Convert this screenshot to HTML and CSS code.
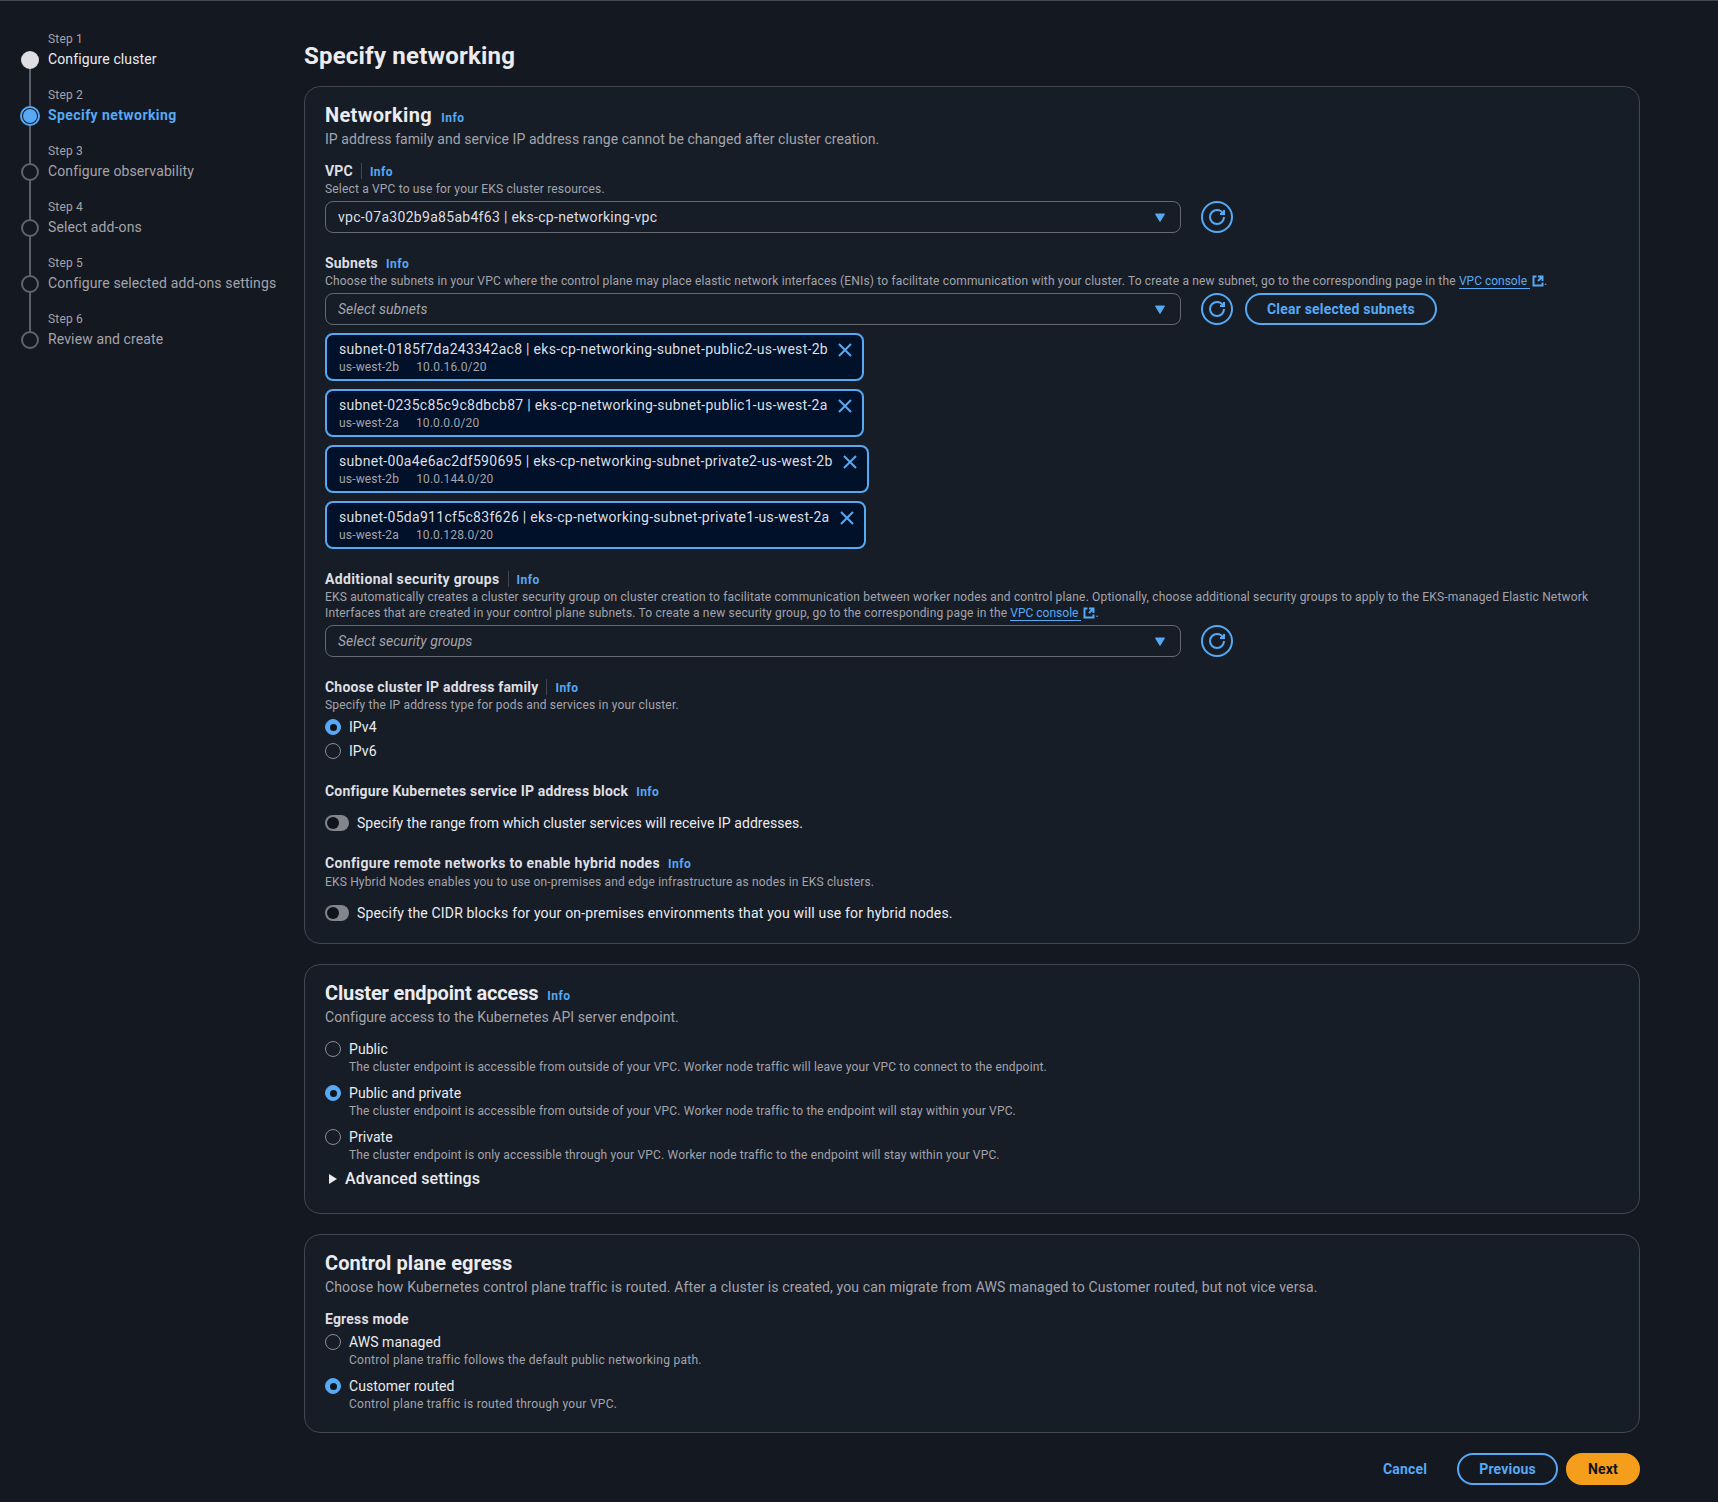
FILE: index.html
```html
<!DOCTYPE html>
<html lang="en">
<head>
  <meta charset="UTF-8">
  <title>Specify networking</title>
  <link rel="stylesheet" href="styles.css">
</head>
<body>
<svg class="icon-defs" aria-hidden="true">
  <symbol id="i-refresh" viewBox="0 0 16 16"><path d="M15 8c0 3.87-3.13 7-7 7s-7-3.13-7-7 3.13-7 7-7c2.79 0 5.2 1.63 6.33 4"/><path d="M15 1v4h-4"/></symbol>
  <symbol id="i-caret" viewBox="0 0 16 16"><path class="solid" d="M3.5 5h9L8 12.5z"/></symbol>
  <symbol id="i-close" viewBox="0 0 16 16"><path d="M2 2l12 12M14 2L2 14"/></symbol>
  <symbol id="i-external" viewBox="0 0 16 16"><path d="M14 8.01v-6H8M14.02 2 8 8M6 2H2v12h12v-4"/></symbol>
</svg>

<div class="layout">
  <!-- Wizard steps -->
  <nav class="sidebar">
    <ol class="steps">
      <li class="step done"><span class="marker"></span><div><div class="step-num">Step 1</div><div class="step-title">Configure cluster</div></div></li>
      <li class="step active"><span class="marker"></span><div><div class="step-num">Step 2</div><div class="step-title">Specify networking</div></div></li>
      <li class="step"><span class="marker"></span><div><div class="step-num">Step 3</div><div class="step-title">Configure observability</div></div></li>
      <li class="step"><span class="marker"></span><div><div class="step-num">Step 4</div><div class="step-title">Select add-ons</div></div></li>
      <li class="step"><span class="marker"></span><div><div class="step-num">Step 5</div><div class="step-title">Configure selected add-ons settings</div></div></li>
      <li class="step"><span class="marker"></span><div><div class="step-num">Step 6</div><div class="step-title">Review and create</div></div></li>
    </ol>
  </nav>

  <main class="content">
    <h1 class="page-title">Specify networking</h1>

    <!-- Networking -->
    <section class="card">
      <h2 class="card-title wide">Networking <a class="info">Info</a></h2>
      <p class="card-desc">IP address family and service IP address range cannot be changed after cluster creation.</p>

      <div class="field">
        <div class="label">VPC<span class="divider"></span><a class="info">Info</a></div>
        <p class="hint">Select a VPC to use for your EKS cluster resources.</p>
        <div class="select-row">
          <div class="select"><span>vpc-07a302b9a85ab4f63 | eks-cp-networking-vpc</span><svg class="icon"><use href="#i-caret"/></svg></div>
          <button class="refresh"><svg class="icon"><use href="#i-refresh"/></svg></button>
        </div>
      </div>

      <div class="field">
        <div class="label">Subnets<a class="info spaced">Info</a></div>
        <p class="hint">Choose the subnets in your VPC where the control plane may place elastic network interfaces (ENIs) to facilitate communication with your cluster. To create a new subnet, go to the corresponding page in the <a class="ext-link">VPC console</a><svg class="icon ext"><use href="#i-external"/></svg>.</p>
        <div class="select-row">
          <div class="select placeholder"><span>Select subnets</span><svg class="icon"><use href="#i-caret"/></svg></div>
          <button class="refresh"><svg class="icon"><use href="#i-refresh"/></svg></button>
          <button class="btn clear">Clear selected subnets</button>
        </div>
        <div class="tokens">
          <div class="token">
            <div><div class="token-name">subnet-0185f7da243342ac8 | eks-cp-networking-subnet-public2-us-west-2b</div><div class="token-meta"><span>us-west-2b</span><span>10.0.16.0/20</span></div></div>
            <svg class="icon"><use href="#i-close"/></svg>
          </div>
          <div class="token narrow">
            <div><div class="token-name">subnet-0235c85c9c8dbcb87 | eks-cp-networking-subnet-public1-us-west-2a</div><div class="token-meta"><span>us-west-2a</span><span>10.0.0.0/20</span></div></div>
            <svg class="icon"><use href="#i-close"/></svg>
          </div>
          <div class="token">
            <div><div class="token-name">subnet-00a4e6ac2df590695 | eks-cp-networking-subnet-private2-us-west-2b</div><div class="token-meta"><span>us-west-2b</span><span>10.0.144.0/20</span></div></div>
            <svg class="icon"><use href="#i-close"/></svg>
          </div>
          <div class="token">
            <div><div class="token-name">subnet-05da911cf5c83f626 | eks-cp-networking-subnet-private1-us-west-2a</div><div class="token-meta"><span>us-west-2a</span><span>10.0.128.0/20</span></div></div>
            <svg class="icon"><use href="#i-close"/></svg>
          </div>
        </div>
      </div>

      <div class="field">
        <div class="label wide">Additional security groups<span class="divider"></span><a class="info">Info</a></div>
        <p class="hint">EKS automatically creates a cluster security group on cluster creation to facilitate communication between worker nodes and control plane. Optionally, choose additional security groups to apply to the EKS-managed Elastic Network Interfaces that are created in your control plane subnets. To create a new security group, go to the corresponding page in the <a class="ext-link">VPC console</a><svg class="icon ext"><use href="#i-external"/></svg>.</p>
        <div class="select-row">
          <div class="select placeholder"><span>Select security groups</span><svg class="icon"><use href="#i-caret"/></svg></div>
          <button class="refresh"><svg class="icon"><use href="#i-refresh"/></svg></button>
        </div>
      </div>

      <div class="field">
        <div class="label">Choose cluster IP address family<span class="divider"></span><a class="info">Info</a></div>
        <p class="hint">Specify the IP address type for pods and services in your cluster.</p>
        <div class="radios tight">
          <div class="radio checked"><span class="dot"></span><div class="radio-label">IPv4</div></div>
          <div class="radio"><span class="dot"></span><div class="radio-label">IPv6</div></div>
        </div>
      </div>

      <div class="field">
        <div class="label">Configure Kubernetes service IP address block<a class="info spaced">Info</a></div>
        <div class="toggle-row first"><span class="toggle"></span>Specify the range from which cluster services will receive IP addresses.</div>
      </div>

      <div class="field">
        <div class="label wide">Configure remote networks to enable hybrid nodes<a class="info spaced">Info</a></div>
        <p class="hint lead">EKS Hybrid Nodes enables you to use on-premises and edge infrastructure as nodes in EKS clusters.</p>
        <div class="toggle-row wide"><span class="toggle"></span>Specify the CIDR blocks for your on-premises environments that you will use for hybrid nodes.</div>
      </div>
    </section>

    <!-- Cluster endpoint access -->
    <section class="card">
      <h2 class="card-title narrow">Cluster endpoint access <a class="info">Info</a></h2>
      <p class="card-desc">Configure access to the Kubernetes API server endpoint.</p>
      <div class="radios open">
        <div class="radio"><span class="dot"></span><div><div class="radio-label">Public</div><div class="radio-desc">The cluster endpoint is accessible from outside of your VPC. Worker node traffic will leave your VPC to connect to the endpoint.</div></div></div>
        <div class="radio checked"><span class="dot"></span><div><div class="radio-label">Public and private</div><div class="radio-desc">The cluster endpoint is accessible from outside of your VPC. Worker node traffic to the endpoint will stay within your VPC.</div></div></div>
        <div class="radio"><span class="dot"></span><div><div class="radio-label">Private</div><div class="radio-desc">The cluster endpoint is only accessible through your VPC. Worker node traffic to the endpoint will stay within your VPC.</div></div></div>
      </div>
      <div class="expander"><svg class="icon"><path d="M4 3v10l8-5z"/></svg>Advanced settings</div>
    </section>

    <!-- Control plane egress -->
    <section class="card">
      <h2 class="card-title">Control plane egress</h2>
      <p class="card-desc wide">Choose how Kubernetes control plane traffic is routed. After a cluster is created, you can migrate from AWS managed to Customer routed, but not vice versa.</p>
      <div class="field compact">
        <div class="label">Egress mode</div>
        <div class="radios stacked">
          <div class="radio"><span class="dot"></span><div><div class="radio-label">AWS managed</div><div class="radio-desc">Control plane traffic follows the default public networking path.</div></div></div>
          <div class="radio checked"><span class="dot"></span><div><div class="radio-label">Customer routed</div><div class="radio-desc">Control plane traffic is routed through your VPC.</div></div></div>
        </div>
      </div>
    </section>

    <div class="actions">
      <button class="btn link">Cancel</button>
      <button class="btn">Previous</button>
      <button class="btn primary">Next</button>
    </div>
  </main>
</div>
</body>
</html>
```
FILE: styles.css
```css
/* Reset */
* {
  margin: 0;
  padding: 0;
  box-sizing: border-box;
}

body {
  font-family: Roboto, "Liberation Sans", sans-serif;
  font-size: 14px;
  line-height: 20px;
  letter-spacing: 0.06px;
  background: #141820;
  color: #dedee3;
  border-top: 1px solid #424650;
  min-height: 1502px;
}

.icon-defs {
  display: none;
}

.layout {
  display: grid;
  grid-template-columns: 304px 1fr;
}

/* Sidebar */
.sidebar {
  padding: 30px 0 0 20px;
}

.steps {
  list-style: none;
}

.step {
  display: grid;
  grid-template-columns: 20px 1fr;
  column-gap: 8px;
  height: 56px;
  position: relative;
}

.step:not(:last-child)::after {
  content: '';
  position: absolute;
  left: 9px;
  top: 29px;
  width: 2px;
  height: 56px;
  background: #5b616c;
}

.marker {
  width: 20px;
  height: 20px;
  margin-top: 19px;
  display: flex;
  align-items: center;
  justify-content: center;
  position: relative;
  z-index: 1;
}

.marker::before {
  content: '';
  width: 14px;
  height: 14px;
  border-radius: 50%;
  border: 2px solid #5f6470;
  background: #141820;
}

.step.done .marker::before {
  background: #dedee3;
  border-color: #dedee3;
}

.step.active .marker {
  border: 2px solid #56a9f5;
  border-radius: 50%;
  background: #141820;
}

.step.active .marker::before {
  width: 10px;
  height: 10px;
  background: #56a9f5;
  border-color: #56a9f5;
}

.step-num {
  font-size: 12px;
  line-height: 16px;
  letter-spacing: 0.17px;
  color: #a4a4ad;
}

.step-title {
  margin-top: 2px;
  letter-spacing: 0.12px;
  color: #a4a4ad;
}

.step.done .step-title {
  color: #ebebf0;
}

.step.active .step-title {
  color: #56a9f5;
  font-weight: 700;
  letter-spacing: 0.42px;
}

/* Main column */
.content {
  padding: 40px 78px 16px 0;
}

.page-title {
  font-size: 24px;
  line-height: 30px;
  font-weight: 700;
  letter-spacing: 0.2px;
  color: #ebebf0;
  margin-bottom: 15px;
}

.card {
  background: #161d26;
  border: 1px solid #424650;
  border-radius: 16px;
  padding: 16px 20px 20px;
  margin-bottom: 20px;
}

.card-title {
  font-size: 20px;
  line-height: 24px;
  font-weight: 700;
  letter-spacing: 0.07px;
  color: #ebebf0;
}

.card-title.wide {
  letter-spacing: 0.34px;
}

.card-title.narrow {
  letter-spacing: -0.14px;
}

.card-title .info {
  margin-left: 4px;
}

.card-desc {
  margin-top: 2px;
  color: #a4a4ad;
}

.card-desc.wide {
  letter-spacing: 0.14px;
}

.info {
  font-size: 12px;
  line-height: 16px;
  font-weight: 700;
  letter-spacing: 0.45px;
  color: #56a9f5;
}

.label .info {
  margin-top: 2px;
}

.info.spaced {
  margin-left: 8px;
}

.field {
  margin-top: 20px;
}

.card-desc + .field {
  margin-top: 12px;
}

.field.compact {
  margin-top: 12px;
}

.label {
  display: flex;
  width: fit-content;
  align-items: center;
  font-weight: 700;
  letter-spacing: 0.19px;
  color: #dedee3;
}

.label.wide {
  letter-spacing: 0.35px;
}

.divider {
  width: 1px;
  height: 16px;
  background: #424650;
  margin: 0 8px;
}

.hint {
  font-size: 12px;
  line-height: 16px;
  letter-spacing: 0.17px;
  color: #a4a4ad;
}

.hint.lead {
  margin-top: 1px;
}

.ext-link {
  color: #56a9f5;
  letter-spacing: 0;
  border-bottom: 1px solid #56a9f5;
  padding-right: 3px;
}

.icon {
  width: 16px;
  height: 16px;
  flex: none;
  fill: none;
  stroke: #56a9f5;
  stroke-width: 2;
}

.icon.ext {
  width: 12px;
  height: 12px;
  vertical-align: -2px;
  margin-left: 2px;
  stroke-width: 2.6;
}

.icon .solid,
#i-caret path {
  fill: #56a9f5;
  stroke-width: 1;
  stroke-linejoin: round;
}

/* Selects */
.select-row {
  display: flex;
  align-items: center;
  margin-top: 4px;
}

.select {
  width: 856px;
  height: 32px;
  display: flex;
  align-items: center;
  justify-content: space-between;
  padding: 0 12px;
  border: 1px solid #656871;
  border-radius: 8px;
  letter-spacing: 0.3px;
  color: #dedee3;
}

.select.placeholder span {
  font-style: italic;
  letter-spacing: 0.03px;
  color: #a4a4ad;
}

.refresh {
  width: 32px;
  height: 32px;
  margin-left: 20px;
  border: 2px solid #56a9f5;
  border-radius: 50%;
  background: none;
  display: flex;
  align-items: center;
  justify-content: center;
}

/* Buttons */
.btn {
  height: 32px;
  padding: 0 20px;
  border: 2px solid #56a9f5;
  border-radius: 16px;
  background: none;
  color: #56a9f5;
  font: 700 14px/20px Roboto, "Liberation Sans", sans-serif;
  letter-spacing: 0.19px;
}

.btn.clear {
  margin-left: 12px;
}

.btn.link {
  border-color: transparent;
}

.btn.primary {
  background: #f59e1c;
  border-color: #f59e1c;
  color: #0f141a;
}

.actions {
  display: flex;
  justify-content: flex-end;
  gap: 8px;
}

/* Selected subnet tokens */
.tokens {
  display: flex;
  flex-direction: column;
  align-items: flex-start;
  gap: 8px;
  margin-top: 8px;
}

.token {
  display: flex;
  align-items: flex-start;
  height: 48px;
  padding: 4px 9px 4px 12px;
  border: 2px solid #56a9f5;
  border-radius: 8px;
  background: #001129;
}

.token .icon {
  margin: 3px 0 0 9px;
}

.token-name {
  letter-spacing: 0.3px;
  color: #dedee3;
}

.token.narrow .token-name {
  letter-spacing: 0.27px;
}

.token-meta {
  display: flex;
  gap: 17px;
  font-size: 12px;
  line-height: 16px;
  letter-spacing: 0.17px;
  color: #a4a4ad;
}

/* Radios */
.radios {
  display: flex;
  flex-direction: column;
}

.radios.tight {
  gap: 4px;
  margin-top: 4px;
}

.radios.stacked {
  gap: 8px;
  margin-top: 3px;
}

.radios.stacked .radio-desc {
  letter-spacing: 0.27px;
}

.radios.open {
  gap: 8px;
  margin-top: 12px;
}

.radio {
  display: flex;
  gap: 8px;
  align-items: flex-start;
}

.dot {
  width: 16px;
  height: 16px;
  margin-top: 2px;
  flex: none;
  border-radius: 50%;
  border: 1px solid #8c8c94;
  display: flex;
  align-items: center;
  justify-content: center;
}

.radio.checked .dot {
  background: #56a9f5;
  border-color: #56a9f5;
}

.radio.checked .dot::after {
  content: '';
  width: 7px;
  height: 7px;
  border-radius: 50%;
  background: #0f141a;
}

.radio-label {
  color: #ebebf0;
}

.radio-desc {
  font-size: 12px;
  line-height: 16px;
  letter-spacing: 0.17px;
  color: #a4a4ad;
}

/* Toggles */
.toggle-row {
  display: flex;
  align-items: center;
  gap: 8px;
  margin-top: 13px;
  color: #ebebf0;
}

.toggle-row.first {
  margin-top: 12px;
}

.toggle-row.wide {
  letter-spacing: 0.17px;
}

.toggle {
  width: 24px;
  height: 16px;
  border-radius: 8px;
  background: #82858c;
  padding: 2px;
}

.toggle::before {
  content: '';
  display: block;
  width: 12px;
  height: 12px;
  border-radius: 50%;
  background: #0f141a;
}

/* Expandable section */
.expander {
  display: flex;
  align-items: center;
  gap: 4px;
  margin: 5px 0 3px;
  font-size: 16px;
  line-height: 22px;
  font-weight: 500;
  letter-spacing: 0.15px;
  color: #ebebf0;
}

.expander .icon {
  fill: #ebebf0;
  stroke: none;
}
```
